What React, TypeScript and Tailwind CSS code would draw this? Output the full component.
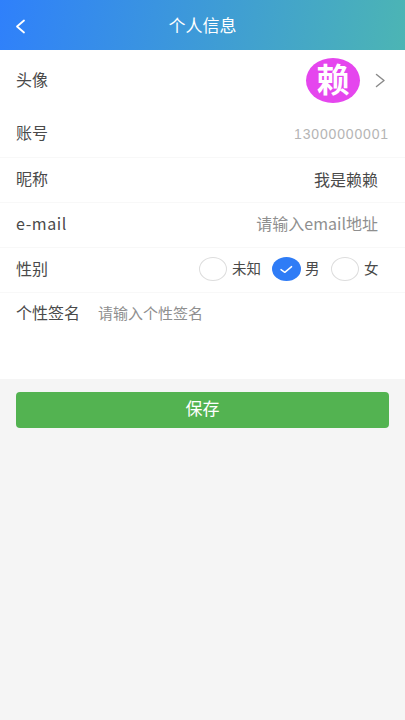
const font = { fontFamily: '"Noto Sans CJK SC", "Liberation Sans", sans-serif' };

function Radio({ label, checked, labelCls }: { label: string; checked?: boolean; labelCls: string }) {
  return (
    <div className="flex items-center">
      <div className={`flex h-[24px] items-center justify-center rounded-[50%] ${checked ? 'w-[29px] bg-[#2f7cf6]' : 'w-[28px] border border-[#dddddd] bg-white'}`}>
        {checked && (
          <svg width="15" height="10" viewBox="0 0 15 10" fill="none">
            <path d="M2 5.6 L5.8 8.4 L12.6 2.6" stroke="#fff" strokeWidth="1.4" strokeLinecap="round" strokeLinejoin="round" />
          </svg>
        )}
      </div>
      <span className={`pb-[2px] text-[14.5px] leading-[24px] text-[#4a4a4a] ${labelCls}`}>{label}</span>
    </div>
  );
}

export default function App() {
  return (
    <div style={font} className="flex h-[720px] w-[405px] flex-col overflow-hidden bg-[#f5f5f5]">
      <header className="relative flex h-[50px] items-center justify-center bg-[linear-gradient(100deg,#2f80fb_0%,#4cb5b4_100%)]">
        <svg className="absolute left-[15px] top-[19px]" width="11" height="16" viewBox="0 0 11 16" fill="none">
          <path d="M9 1.5 L2 7.5 L9 13.5" stroke="#fff" strokeWidth="1.8" strokeLinecap="round" strokeLinejoin="round" />
        </svg>
        <span className="pb-[1px] text-[17px] text-white">个人信息</span>
      </header>

      <main className="flex h-[329px] flex-col bg-white">
        <div className="flex h-[60px] items-center pl-4 pr-[19px]">
          <span className="pb-[2px] text-[16px] text-[#4a4a4a]">头像</span>
          <div className="ml-auto mr-[1px] flex h-[45px] w-[54px] items-center justify-center rounded-[50%] bg-[#e546ee] pb-[4px] text-[33px] font-bold leading-none text-white">赖</div>
          <svg className="ml-[14px]" width="11" height="15" viewBox="0 0 11 15" fill="none">
            <path d="M1.5 1.5 L9 7.5 L1.5 13.5" stroke="#8a8a8a" strokeWidth="1.5" strokeLinecap="round" strokeLinejoin="round" />
          </svg>
        </div>

        <div className="flex h-[48px] items-center justify-between border-b border-[#f8f8f8] pb-[1px] pl-4 pr-[16px]">
          <span className="pb-[2px] text-[16px] text-[#4a4a4a]">账号</span>
          <span className="pt-[2px] text-[14px] tracking-[0.85px] text-[#b5b5b5]" style={{ fontFamily: '"Liberation Sans", sans-serif' }}>13000000001</span>
        </div>

        <div className="flex h-[45px] items-center justify-between border-b border-[#f8f8f8] pb-[2px] pl-4 pr-[27px]">
          <span className="pb-[2px] text-[16px] text-[#4a4a4a]">昵称</span>
          <span className="text-[16px] text-[#4a4a4a]">我是赖赖</span>
        </div>

        <div className="flex h-[45px] items-center justify-between border-b border-[#f8f8f8] pb-[2px] pl-4 pr-[27px]">
          <span className="pb-[2px] text-[16px] tracking-[0.6px] text-[#4a4a4a]">e-mail</span>
          <span className="pb-[2px] text-[16px] text-[#8f8f8f]">请输入email地址</span>
        </div>

        <div className="flex h-[45px] items-center border-b border-[#f8f8f8] pb-[2px] pl-4 pr-[27px]">
          <span className="pb-[2px] text-[16px] text-[#4a4a4a]">性别</span>
          <div className="ml-auto flex items-center gap-[11px]">
            <Radio label="未知" labelCls="ml-[5px] w-[29px]" />
            <Radio label="男" checked labelCls="ml-[4px] w-[14px]" />
            <div className="ml-[1px]">
              <Radio label="女" labelCls="ml-[5px] w-[14px]" />
            </div>
          </div>
        </div>

        <div className="flex flex-1 items-start pl-4 pt-[8px]">
          <span className="text-[16px] leading-[22px] text-[#4a4a4a]">个性签名</span>
          <span className="ml-[18px] text-[15px] leading-[24px] text-[#8f8f8f]">请输入个性签名</span>
        </div>
      </main>

      <button className="mx-4 mt-[13px] h-[36px] w-[373px] rounded-[4px] bg-[#53b351] pb-[4px] text-[17px] text-white">保存</button>
    </div>
  );
}
